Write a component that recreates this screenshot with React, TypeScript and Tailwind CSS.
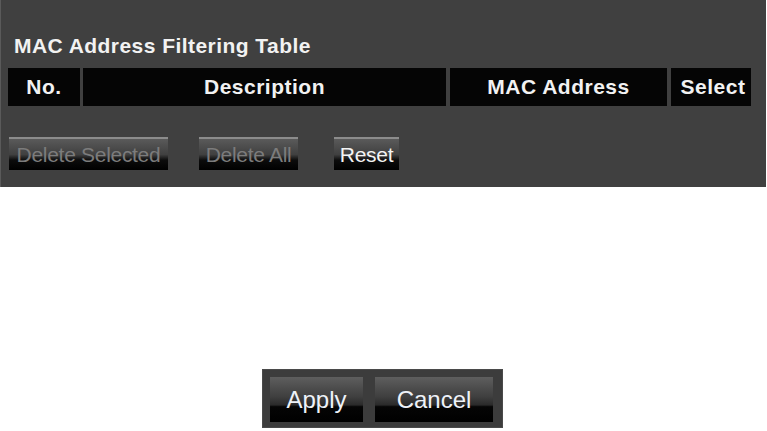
const btn =
  'h-[33px] border-t-2 border-[#8c8c8c] bg-[linear-gradient(to_bottom,#5a5a5a_0%,#404040_50%,#0c0c0c_68%,#000000_100%)] text-[21px] leading-[31px] tracking-[-0.3px] flex items-center justify-center'

const bigBtn =
  'h-[45px] bg-[linear-gradient(to_bottom,#5e5e5e_0%,#3e3e3e_45%,#2a2a2a_62%,#050505_66%,#000000_100%)] text-[24px] text-[#eef2f8] flex items-center justify-center'

export default function App() {
  return (
    <div className="w-[767px] h-[431px] bg-white font-['Liberation_Sans',Arial,sans-serif] overflow-hidden">
      <div className="w-[766px] h-[187px] bg-[#404040] border-l border-[#5a5a5a] pt-[34px] pl-[7px] pr-[13px]">
        <div className="pl-[6px] text-[21px] leading-[24px] font-bold tracking-[0.45px] text-[#f2f2f2]">
          MAC Address Filtering Table
        </div>

        <div className="mt-[10px] h-[38px] grid grid-cols-[72px_363px_218px_81px] gap-x-[3px] [&>div:nth-child(n+3)]:ml-[1px]">
          <div className="bg-[#050505] flex items-center justify-center text-[21px] font-bold tracking-[0.5px] text-[#f2f2f2]">
            No.
          </div>
          <div className="bg-[#050505] flex items-center justify-center text-[21px] font-bold tracking-[0.5px] text-[#f2f2f2]">
            Description
          </div>
          <div className="bg-[#050505] flex items-center justify-center text-[21px] font-bold tracking-[0.5px] text-[#f2f2f2]">
            MAC Address
          </div>
          <div className="bg-[#050505] flex items-center justify-center pl-[4px] text-[21px] font-bold tracking-[0.5px] text-[#f2f2f2]">
            Select
          </div>
        </div>

        <div className="mt-[31px] flex items-start">
          <button className={btn + ' w-[159px] ml-[1px] text-[#7c7c7c]'}>Delete Selected</button>
          <button className={btn + ' w-[99px] ml-[31px] text-[#7c7c7c]'}>Delete All</button>
          <button className={btn + ' w-[65px] ml-[36px] text-[#f4f4f4]'}>Reset</button>
        </div>
      </div>

      <div className="mt-[182px] ml-[262px] w-[241px] h-[59px] bg-[#3c3c3c] border border-[#4a4a4a] pt-[7px] pl-[7px] flex items-start">
        <button className={bigBtn + ' w-[93px]'}>Apply</button>
        <button className={bigBtn + ' w-[118px] ml-[12px]'}>Cancel</button>
      </div>
    </div>
  )
}
